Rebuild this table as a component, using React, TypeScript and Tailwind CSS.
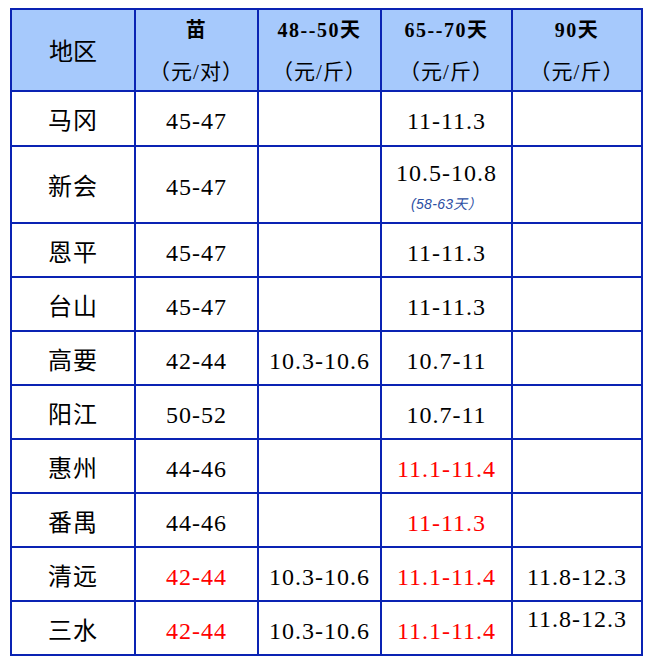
import React from 'react';

interface PriceRow {
  region: string;
  seedling: string;
  seedlingRed?: boolean;
  d48: string;
  d65: string;
  d65Red?: boolean;
  d65Note?: string;
  d90: string;
  d90Top?: boolean;
}

const rows: PriceRow[] = [
  { region: '马冈', seedling: '45-47', d48: '', d65: '11-11.3', d90: '' },
  { region: '新会', seedling: '45-47', d48: '', d65: '10.5-10.8', d65Note: '(58-63天）', d90: '' },
  { region: '恩平', seedling: '45-47', d48: '', d65: '11-11.3', d90: '' },
  { region: '台山', seedling: '45-47', d48: '', d65: '11-11.3', d90: '' },
  { region: '高要', seedling: '42-44', d48: '10.3-10.6', d65: '10.7-11', d90: '' },
  { region: '阳江', seedling: '50-52', d48: '', d65: '10.7-11', d90: '' },
  { region: '惠州', seedling: '44-46', d48: '', d65: '11.1-11.4', d65Red: true, d90: '' },
  { region: '番禺', seedling: '44-46', d48: '', d65: '11-11.3', d65Red: true, d90: '' },
  { region: '清远', seedling: '42-44', seedlingRed: true, d48: '10.3-10.6', d65: '11.1-11.4', d65Red: true, d90: '11.8-12.3' },
  { region: '三水', seedling: '42-44', seedlingRed: true, d48: '10.3-10.6', d65: '11.1-11.4', d65Red: true, d90: '11.8-12.3', d90Top: true },
];

const font = "font-['Liberation_Serif','Noto_Sans_CJK_SC',serif]";

const Cell: React.FC<{ children?: React.ReactNode; red?: boolean; top?: boolean }> = ({ children, red, top }) => (
  <div
    className={`bg-white flex justify-center ${top ? 'items-start pt-[3px]' : 'items-center pt-[5px]'} text-[24px] leading-[28px] tracking-[1px] whitespace-nowrap ${
      red ? 'text-[#ff0000]' : 'text-black'
    }`}
  >
    {children}
  </div>
);

const HeaderCell: React.FC<{ title: string; unit: string }> = ({ title, unit }) => (
  <div className="bg-[#a6c9fc] flex flex-col items-center justify-center pt-[2px] text-black">
    <span className="text-[20px] leading-[42px] font-bold tracking-[1.5px]">{title}</span>
    <span className="text-[21px] leading-[42px] tracking-[1px]">{unit}</span>
  </div>
);

export default function App() {
  return (
    <div className={`min-h-screen bg-white pt-[8px] pl-[10px] ${font}`}>
      <div className="grid w-fit grid-cols-[122px_121px_121px_129px_128px] grid-rows-[80px_53px_75px_repeat(8,52px)] gap-[2px] p-[2px] bg-[#0a23b3]">
        <div className="bg-[#a6c9fc] flex items-center justify-center pt-[4px] text-[24px] text-black">地区</div>
        <HeaderCell title="苗" unit="（元/对）" />
        <HeaderCell title="48--50天" unit="（元/斤）" />
        <HeaderCell title="65--70天" unit="（元/斤）" />
        <HeaderCell title="90天" unit="（元/斤）" />

        {rows.map((r) => (
          <React.Fragment key={r.region}>
            <Cell>{r.region}</Cell>
            <Cell red={r.seedlingRed}>{r.seedling}</Cell>
            <Cell>{r.d48}</Cell>
            {r.d65Note ? (
              <div className="bg-white flex flex-col items-center justify-start pt-[12px] whitespace-nowrap">
                <span className="text-[24px] leading-[28px] tracking-[1px] text-black">{r.d65}</span>
                <span className="mt-[8px] font-['Liberation_Sans','Noto_Sans_CJK_SC',sans-serif] italic text-[14px] leading-[18px] tracking-[0.3px] text-[#2d4fa3]">
                  {r.d65Note}
                </span>
              </div>
            ) : (
              <Cell red={r.d65Red}>{r.d65}</Cell>
            )}
            <Cell top={r.d90Top}>{r.d90}</Cell>
          </React.Fragment>
        ))}
      </div>
    </div>
  );
}
